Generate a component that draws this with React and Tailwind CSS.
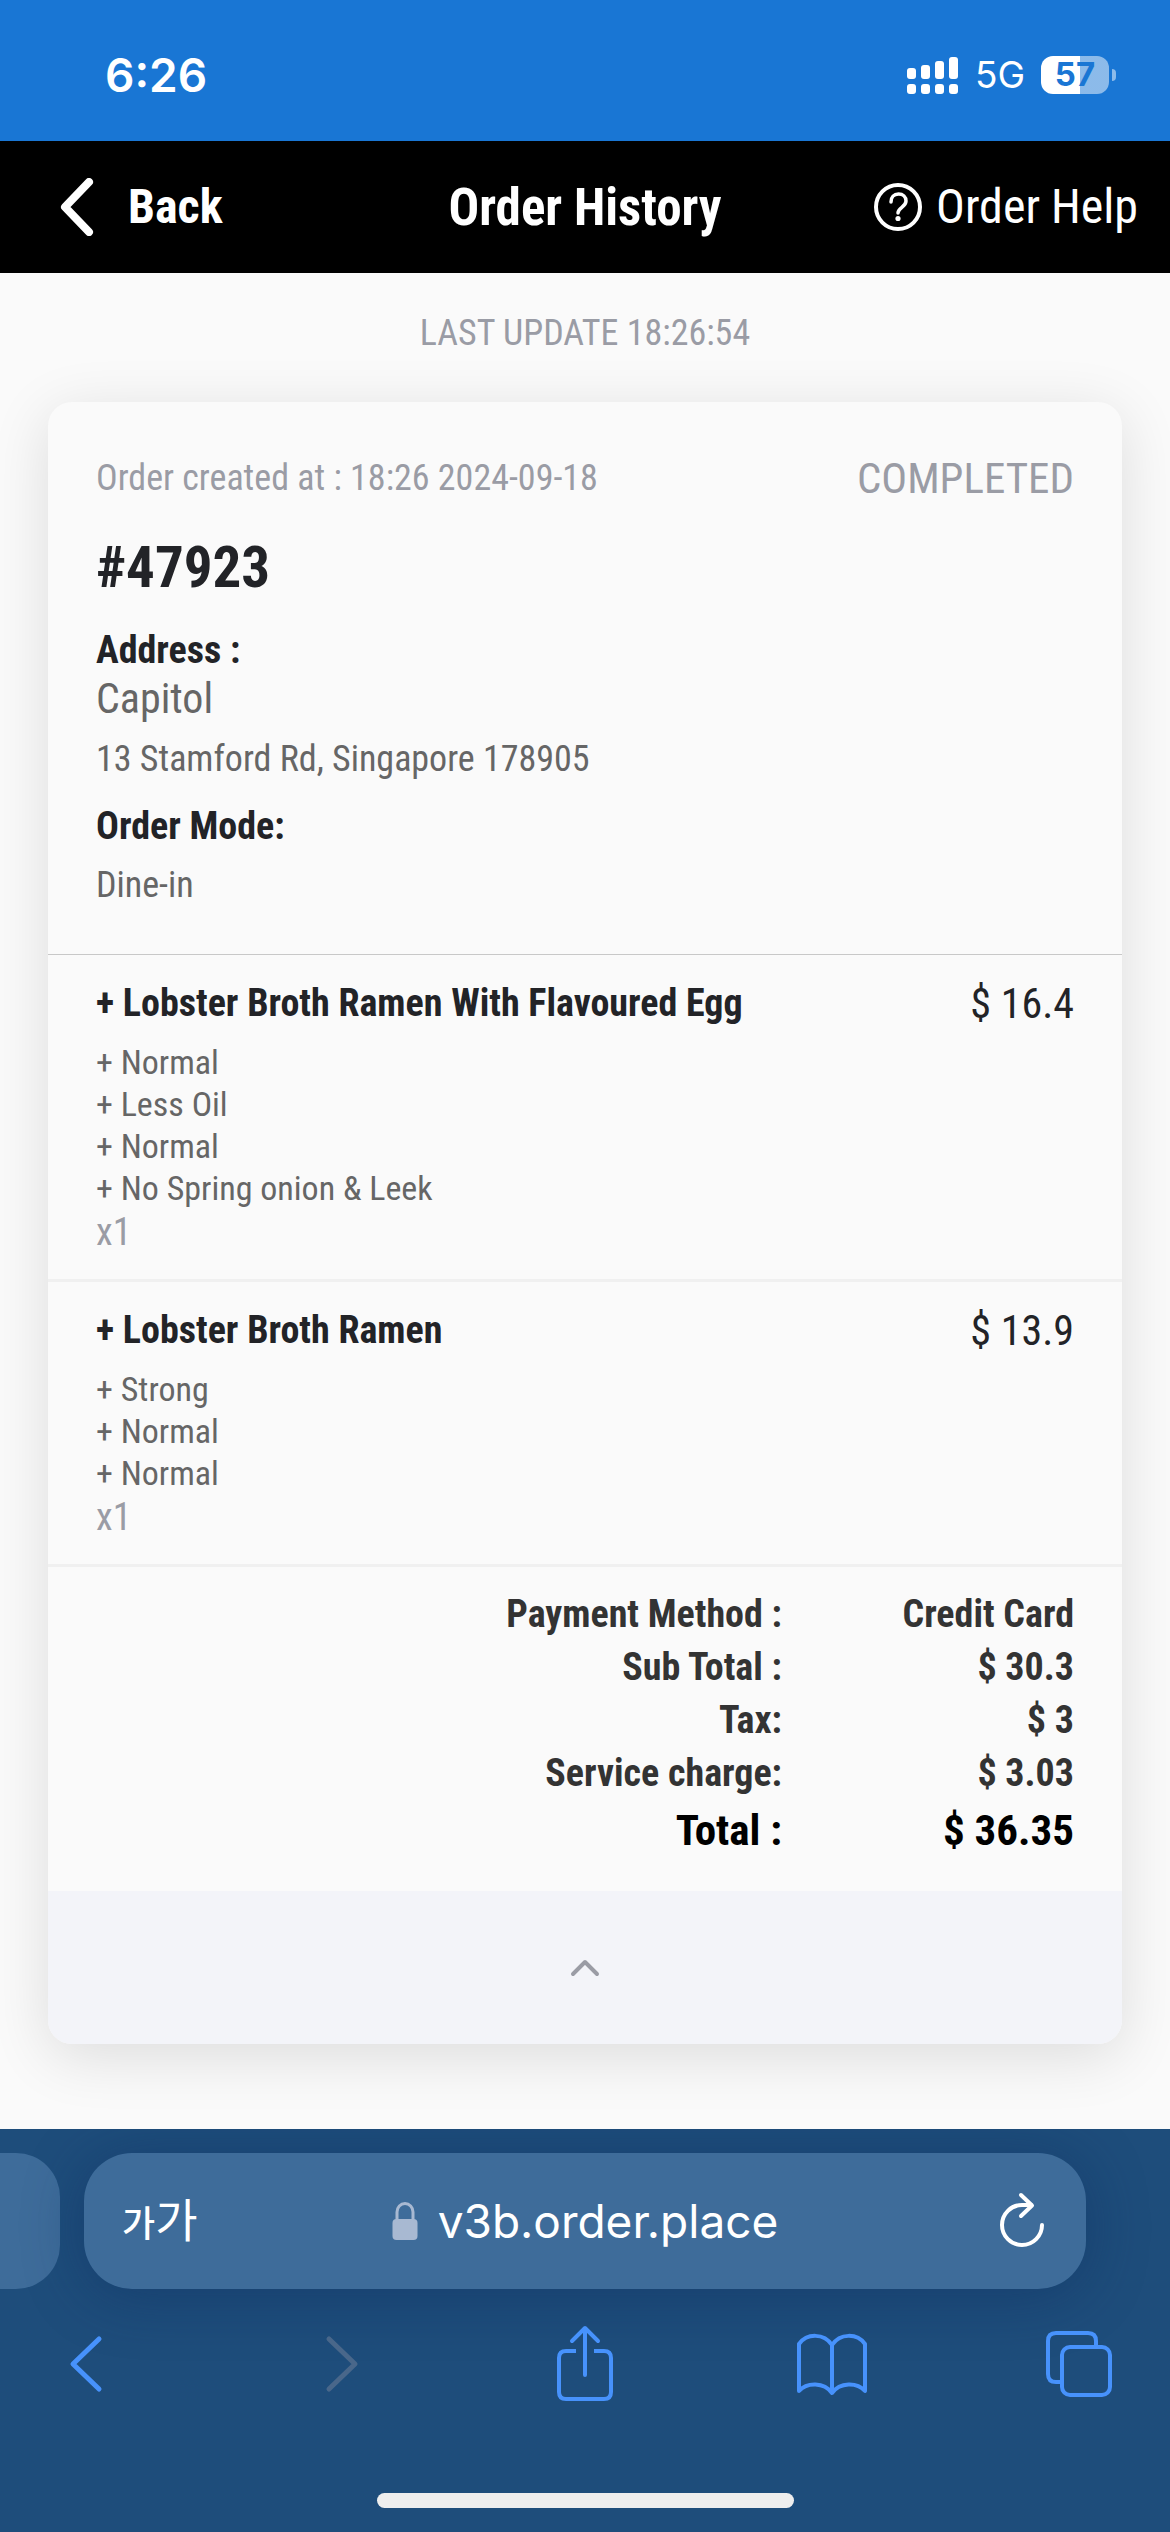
import { useState } from "react";

const order = {
  id: "#47923",
  createdAt: "18:26 2024-09-18",
  status: "COMPLETED",
  outlet: "Capitol",
  address: "13 Stamford Rd, Singapore 178905",
  mode: "Dine-in",
  items: [
    {
      name: "Lobster Broth Ramen With Flavoured Egg",
      price: "$ 16.4",
      qty: 1,
      options: ["Normal", "Less Oil", "Normal", "No Spring onion & Leek"],
    },
    {
      name: "Lobster Broth Ramen",
      price: "$ 13.9",
      qty: 1,
      options: ["Strong", "Normal", "Normal"],
    },
  ],
  charges: [
    { label: "Payment Method :", value: "Credit Card" },
    { label: "Sub Total :", value: "$ 30.3" },
    { label: "Tax:", value: "$ 3" },
    { label: "Service charge:", value: "$ 3.03" },
  ],
  total: "$ 36.35",
};

function StatusBar() {
  return (
    <div className="flex h-[141px] items-center justify-between bg-[#1976d4] pt-2 pr-[54px] pl-[105px] font-['Inter',sans-serif] text-white">
      <span className="text-[46px] leading-none font-semibold">6:26</span>
      <div className="flex items-center gap-4">
        <svg className="h-[38px] w-[52px]" viewBox="0 0 52 38" fill="currentColor">
          <rect x="0" y="12" width="9" height="11" rx="3" />
          <rect x="14" y="9" width="9" height="14" rx="3" />
          <rect x="28" y="5" width="9" height="18" rx="3" />
          <rect x="42" y="1" width="9" height="22" rx="3" />
          <rect x="0" y="28" width="9" height="10" rx="3" />
          <rect x="14" y="28" width="9" height="10" rx="3" />
          <rect x="28" y="28" width="9" height="10" rx="3" />
          <rect x="42" y="28" width="9" height="10" rx="3" />
        </svg>
        <span className="text-[37px] leading-none">5G</span>
        <div className="flex items-center gap-[3px]">
          <div className="flex h-[38px] w-[68px] items-center justify-center rounded-xl bg-linear-to-r from-white from-57% to-white/50 to-57% text-[33px] leading-none font-bold text-[#1976d4]">
            57
          </div>
          <div className="h-3 w-1 rounded-r-full bg-white/50" />
        </div>
      </div>
    </div>
  );
}

function Header() {
  return (
    <header className="grid h-[132px] grid-cols-[1fr_auto_1fr] items-center bg-black px-8 text-white">
      <button className="flex items-center gap-[34px] justify-self-start pl-7 text-[48px] leading-none font-bold">
        <svg className="h-[58px] w-[34px]" viewBox="0 0 34 58" fill="none" stroke="currentColor" strokeWidth="8" strokeLinecap="round" strokeLinejoin="round">
          <path d="M29 4 5 29l24 25" />
        </svg>
        Back
      </button>
      <h1 className="text-[51px] leading-none font-bold">Order History</h1>
      <a href="#help" className="flex items-center gap-[14px] justify-self-end text-[48px] leading-none">
        <svg className="h-12 w-12" viewBox="0 0 48 48" fill="none" stroke="currentColor" strokeWidth="4" strokeLinecap="round">
          <circle cx="24" cy="24" r="22" />
          <path d="M17 19c0-5 3-8 7.500-8s7.500 3 7.500 7c0 6-8 6.500-8 12" strokeWidth="3.500" />
          <circle cx="24" cy="35.500" r="2.600" fill="currentColor" stroke="none" />
        </svg>
        Order Help
      </a>
    </header>
  );
}

function OrderItem({ item }) {
  return (
    <section className="flex items-start justify-between border-b-[3px] border-[#f0f0f0] px-12 pt-6 pb-[26px]">
      <div>
        <h3 className="text-[38px] leading-[48px] font-bold text-[#222327]">+ {item.name}</h3>
        <ul className="mt-[14px] text-[34px] leading-[42px] text-[#666]">
          {item.options.map((option, i) => (
            <li key={i}>+ {option}</li>
          ))}
        </ul>
        <p className="mt-[2px] text-[38px] leading-[42px] text-[#9a9ca5]">x{item.qty}</p>
      </div>
      <span className="text-[42px] leading-[50px] text-[#222327]">{item.price}</span>
    </section>
  );
}

function OrderCard() {
  const [open, setOpen] = useState(true);

  return (
    <article className="overflow-hidden rounded-3xl bg-[#fafafa] shadow-[0_12px_60px_rgba(0,0,0,0.12)]">
      <div className="px-12 pt-[52px] pb-12">
        <div className="flex items-center justify-between leading-[48px] text-[#9a9ca5]">
          <span className="text-[36px]">Order created at : {order.createdAt}</span>
          <span className="text-[43px]">{order.status}</span>
        </div>
        <h2 className="mt-[30px] text-[57px] leading-[72px] font-bold text-[#222327]">{order.id}</h2>
        <h3 className="mt-[22px] text-[38px] leading-[48px] font-bold text-[#222327]">Address :</h3>
        <p className="text-[42px] leading-[50px] text-[#666]">{order.outlet}</p>
        <p className="mt-[14px] text-[36px] leading-[42px] text-[#666]">{order.address}</p>
        <h3 className="mt-[22px] text-[38px] leading-[48px] font-bold text-[#222327]">Order Mode:</h3>
        <p className="mt-[14px] text-[36px] leading-[42px] text-[#666]">{order.mode}</p>
      </div>

      {open && (
        <div className="border-t border-[#c8c8c8]">
          {order.items.map((item) => (
            <OrderItem key={item.name} item={item} />
          ))}
          <div className="px-12 pt-[21px] pb-[31px]">
            <table className="w-full text-right font-bold">
              <tbody className="text-[38px] leading-[53px] text-[#333]">
                {order.charges.map((row) => (
                  <tr key={row.label}>
                    <th scope="row" className="p-0 text-right">{row.label}</th>
                    <td className="w-[292px] p-0">{row.value}</td>
                  </tr>
                ))}
              </tbody>
              <tfoot className="text-[43px] leading-[60px] text-black">
                <tr>
                  <th scope="row" className="p-0 text-right">Total :</th>
                  <td className="p-0">{order.total}</td>
                </tr>
              </tfoot>
            </table>
          </div>
        </div>
      )}

      <button
        className="flex h-[153px] w-full items-center justify-center bg-[#f3f4f9] text-[#9a9ca5]"
        aria-label="Toggle order details"
        onClick={() => setOpen(!open)}
      >
        <svg className="h-[18px] w-[30px]" viewBox="0 0 30 18" fill="none" stroke="currentColor" strokeWidth="4" strokeLinecap="round" strokeLinejoin="round">
          <path d="M3 15 15 3l12 12" />
        </svg>
      </button>
    </article>
  );
}

function AddressBar() {
  return (
    <div className="flex gap-6 pr-[84px]">
      <div className="h-[136px] w-[60px] rounded-r-[44px] bg-[#3e6c9a]" />
      <div className="grid h-[136px] flex-1 grid-cols-[1fr_auto_1fr] items-center rounded-[48px] bg-[#3e6c9a] px-[38px] text-white shadow-[0_6px_60px_rgba(10,40,90,0.4)]">
        <button className="flex items-baseline justify-self-start pb-2 font-['Noto_Sans_CJK_KR',sans-serif] leading-none" aria-label="Page settings">
          <span className="text-[36px] font-medium">가</span>
          <span className="text-[46px]">가</span>
        </button>
        <div className="flex items-center gap-5 font-['Inter',sans-serif] text-[46px] leading-none">
          <svg className="h-10 w-[26px]" viewBox="0 0 26 40" fill="none">
            <path d="M5 20V11a8 8.500 0 0 1 16 0v9" stroke="#a8b9d2" strokeWidth="3" />
            <rect x="0.500" y="18" width="25" height="21" rx="4" fill="#a8b9d2" />
          </svg>
          v3b.order.place
        </div>
        <button className="justify-self-end" aria-label="Reload">
          <svg className="h-[58px] w-[52px]" viewBox="0 0 52 58" fill="none" stroke="currentColor" strokeWidth="4" strokeLinecap="round" strokeLinejoin="round">
            <path d="M46 33a20 20 0 1 1-20-20h9" />
            <path d="M25 3l11 10.500L25 24" />
          </svg>
        </button>
      </div>
    </div>
  );
}

function ToolbarButton({ label, disabled, children }) {
  return (
    <button aria-label={label} disabled={disabled} className="flex w-[74px] items-center justify-center disabled:text-[#49678a]">
      {children}
    </button>
  );
}

function BrowserBar() {
  return (
    <footer className="overflow-hidden bg-[#1e4d7b] pt-6">
      <AddressBar />
      <nav className="mt-[33px] flex items-center justify-between px-[54px] text-[#4792fc]">
        <ToolbarButton label="Back">
          <svg className="h-[58px] w-[46px]" viewBox="0 0 46 58" fill="none" stroke="currentColor" strokeWidth="5" strokeLinecap="round" strokeLinejoin="round">
            <path d="M31 4 5 29l26 25" />
          </svg>
        </ToolbarButton>
        <ToolbarButton label="Forward" disabled>
          <svg className="h-[58px] w-[46px]" viewBox="0 0 46 58" fill="none" stroke="currentColor" strokeWidth="5" strokeLinecap="round" strokeLinejoin="round">
            <path d="M14 4l26 25L14 54" />
          </svg>
        </ToolbarButton>
        <ToolbarButton label="Share">
          <svg className="h-[84px] w-[60px]" viewBox="0 0 60 84" fill="none" stroke="currentColor" strokeWidth="4" strokeLinecap="round" strokeLinejoin="round">
            <path d="M21 29H11q-7 0-7 7v34q0 7 7 7h38q7 0 7-7V36q0-7-7-7H39" strokeLinecap="butt" />
            <path d="M30 53V7M17 19 30 6l13 13" />
          </svg>
        </ToolbarButton>
        <ToolbarButton label="Bookmarks">
          <svg className="h-[64px] w-[74px]" viewBox="0 0 74 64" fill="none" stroke="currentColor" strokeWidth="4" strokeLinecap="round" strokeLinejoin="round">
            <path d="M37 13C29 1 12 1 4 12v47c8-9 25-9 33 2 8-11 25-11 33-2V12C62 1 45 1 37 13v48" />
          </svg>
        </ToolbarButton>
        <ToolbarButton label="Tabs">
          <svg className="h-[70px] w-[70px]" viewBox="0 0 70 70" fill="none" stroke="currentColor" strokeWidth="4">
            <rect x="18" y="18" width="48" height="48" rx="8" />
            <path d="M18 53h-6q-8 0-8-8V12q0-8 8-8h32q8 0 8 8v6" />
          </svg>
        </ToolbarButton>
      </nav>
      <div className="mx-auto mt-[87px] mb-6 h-[15px] w-[417px] rounded-full bg-[#eee]" />
    </footer>
  );
}

function App() {
  return (
    <div className="flex min-h-screen flex-col bg-[#fafafa] font-['Roboto_Condensed','Roboto',sans-serif]">
      <StatusBar />
      <Header />
      <main className="flex-1 px-12 pt-[39px] pb-[85px]">
        <p className="mb-12 text-center text-[36px] leading-[42px] text-[#9a9ca5]">LAST UPDATE 18:26:54</p>
        <OrderCard />
      </main>
      <BrowserBar />
    </div>
  );
}

export default App;
